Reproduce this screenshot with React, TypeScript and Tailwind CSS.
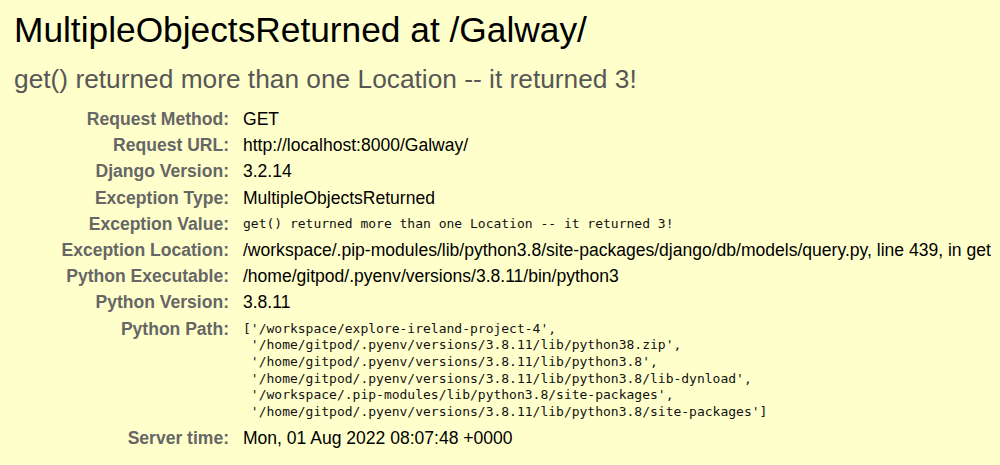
const rows: { label: string; value: string; mono?: boolean }[] = [
  { label: 'Request Method:', value: 'GET' },
  { label: 'Request URL:', value: 'http://localhost:8000/Galway/' },
  { label: 'Django Version:', value: '3.2.14' },
  { label: 'Exception Type:', value: 'MultipleObjectsReturned' },
  { label: 'Exception Value:', value: 'get() returned more than one Location -- it returned 3!', mono: true },
  {
    label: 'Exception Location:',
    value: '/workspace/.pip-modules/lib/python3.8/site-packages/django/db/models/query.py, line 439, in get',
  },
  { label: 'Python Executable:', value: '/home/gitpod/.pyenv/versions/3.8.11/bin/python3' },
  { label: 'Python Version:', value: '3.8.11' },
]

const pythonPath = [
  "['/workspace/explore-ireland-project-4',",
  " '/home/gitpod/.pyenv/versions/3.8.11/lib/python38.zip',",
  " '/home/gitpod/.pyenv/versions/3.8.11/lib/python3.8',",
  " '/home/gitpod/.pyenv/versions/3.8.11/lib/python3.8/lib-dynload',",
  " '/workspace/.pip-modules/lib/python3.8/site-packages',",
  " '/home/gitpod/.pyenv/versions/3.8.11/lib/python3.8/site-packages']",
]

const sans = "font-['Liberation_Sans',Arial,sans-serif]"
const mono = "font-['DejaVu_Sans_Mono','Liberation_Mono',monospace]"

function Label({ children }: { children: string }) {
  return (
    <div className="text-right font-bold text-[#666666] leading-[26.2px] whitespace-nowrap">{children}</div>
  )
}

export default function App() {
  return (
    <div className={`min-h-[465px] w-full bg-[#ffffcc] ${sans} text-black`}>
      <div className="pt-[10px]">
        <h1 className="px-[14px] text-[35.3px] leading-[40px] font-normal">
          MultipleObjectsReturned at /Galway/
        </h1>
        <h2 className="mt-[14px] px-[14px] text-[26.3px] leading-[30px] font-normal text-[#575757]">
          get() returned more than one Location -- it returned 3!
        </h2>

        <div className="mt-[12px] grid grid-cols-[229px_1fr] gap-x-[14px] text-[17.55px]">
          {rows.map((row) => (
            <div key={row.label} className="contents">
              <Label>{row.label}</Label>
              <div
                className={
                  row.mono
                    ? `${mono} text-[13px] leading-[26.2px] text-[#111] whitespace-pre`
                    : 'leading-[26.2px] whitespace-nowrap'
                }
              >
                {row.value}
              </div>
            </div>
          ))}

          <Label>Python Path:</Label>
          <pre className={`${mono} text-[13px] leading-[16.67px] pt-[5px] pb-[4.4px] text-[#111]`}>
            {pythonPath.join('\n')}
          </pre>

          <Label>Server time:</Label>
          <div className="leading-[26.2px]">Mon, 01 Aug 2022 08:07:48 +0000</div>
        </div>
      </div>
    </div>
  )
}
